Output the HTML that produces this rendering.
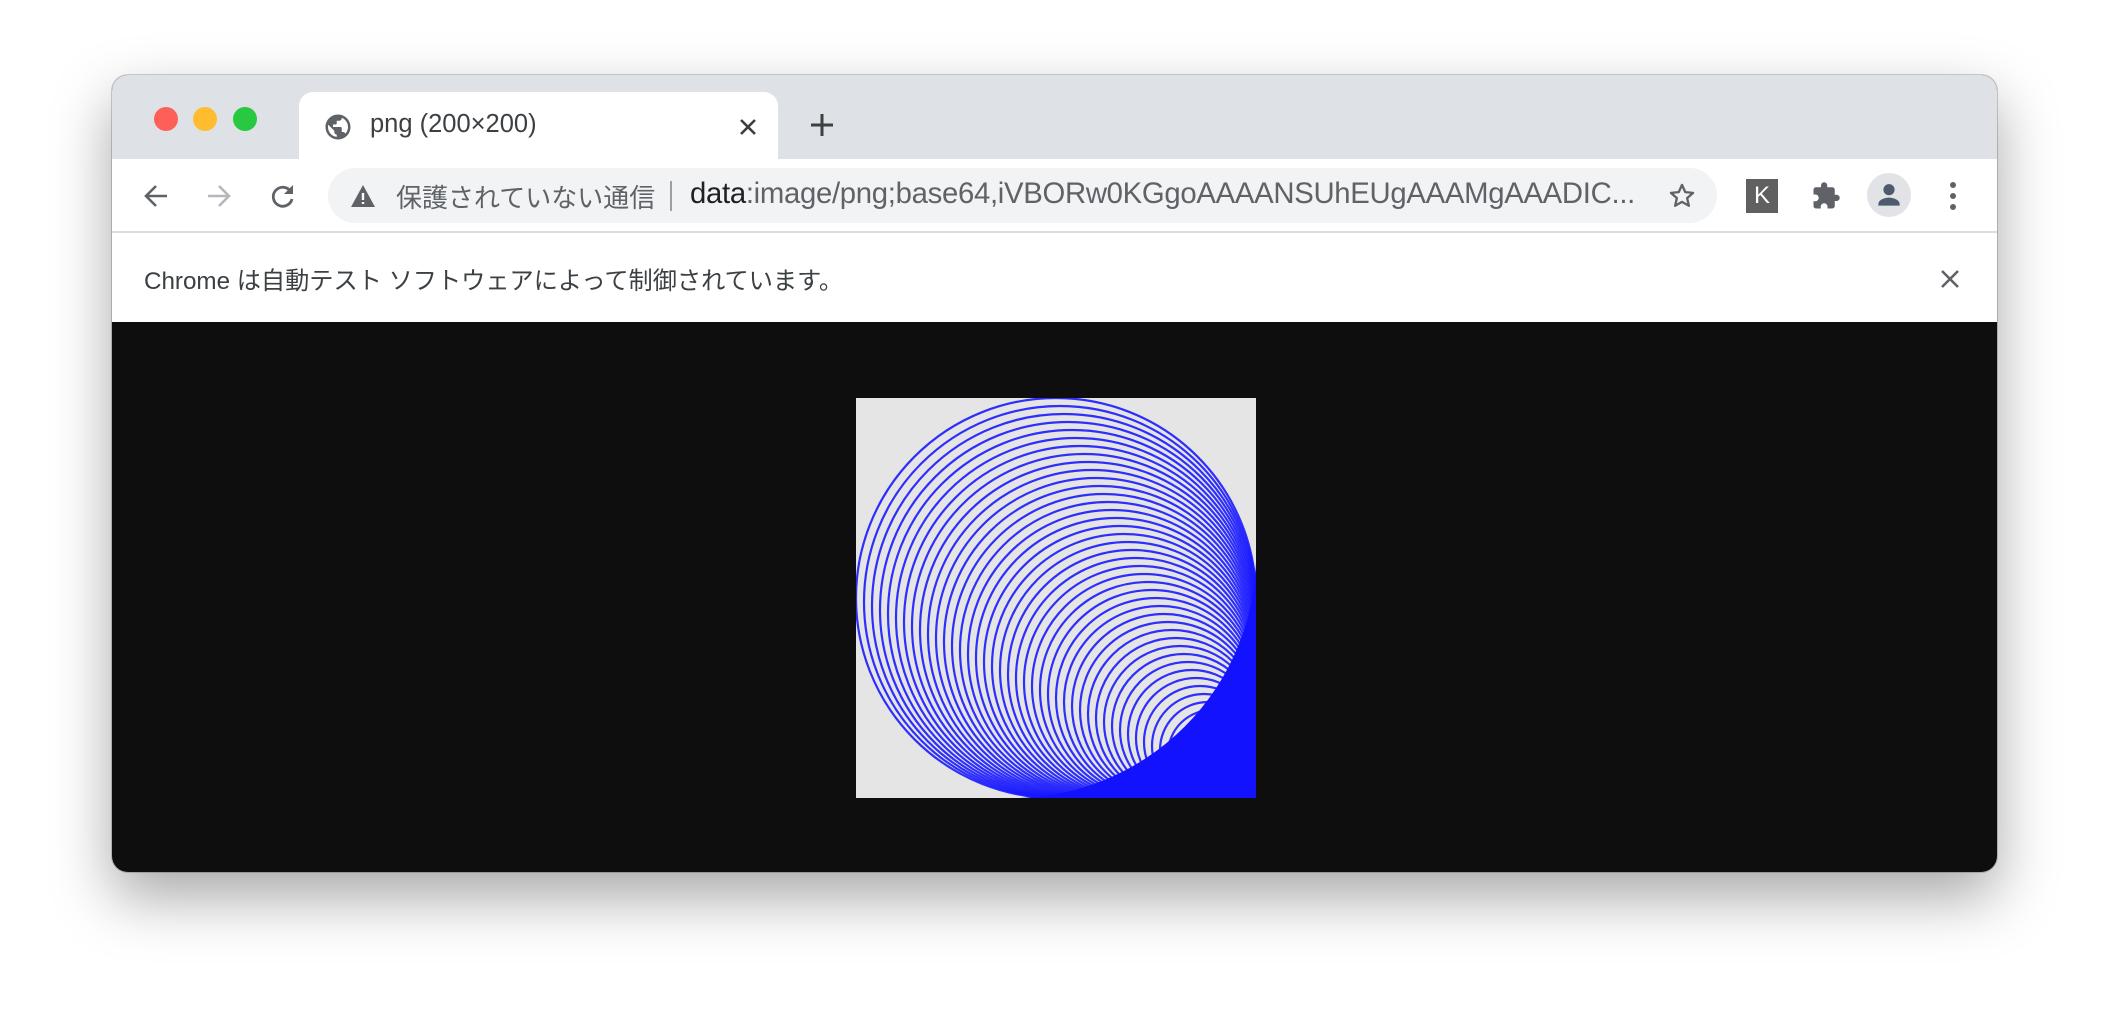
<!DOCTYPE html>
<html><head><meta charset="utf-8"><style>
*{margin:0;padding:0;box-sizing:border-box}
body{width:2110px;height:1022px;background:#fff;position:relative;overflow:hidden;font-family:"Liberation Sans","Noto Sans CJK JP",sans-serif}
.win{position:absolute;left:112px;top:75px;width:1885px;height:797px;border-radius:16px;overflow:hidden;background:#0e0e0e;box-shadow:0 25px 60px rgba(0,0,0,.35),0 0 0 1px rgba(0,0,0,.18)}
.strip{position:absolute;left:0;top:0;width:100%;height:84px;background:#dee1e6}
.dot{position:absolute;top:32px;width:24px;height:24px;border-radius:50%}
.tab{position:absolute;left:187px;top:17px;width:479px;height:70px;background:#fff;border-radius:14px 14px 0 0}
.tab .t{position:absolute;left:71px;top:18px;font-size:25.5px;color:#3c4043}
.tool{position:absolute;left:0;top:84px;width:100%;height:74px;background:#fff;border-bottom:2px solid #dadce0}
.omni{position:absolute;left:216px;top:9px;width:1389px;height:55px;border-radius:28px;background:#f1f3f4}
.omni .sec{position:absolute;left:68px;top:10px;font-size:26px;color:#5f6368}
.omni .div{position:absolute;left:342px;top:13px;width:2px;height:30px;background:#9aa0a6}
.omni .url{position:absolute;left:362px;top:9px;font-size:29.3px;color:#5f6368;letter-spacing:-0.3px}
.info{position:absolute;left:0;top:158px;width:100%;height:89px;background:#fff}
.info .t{position:absolute;left:32px;top:28px;font-size:24.2px;color:#3c4043}
.img{position:absolute;left:744px;top:323px;width:400px;height:400px;background:#e5e5e5;overflow:hidden}
</style></head><body>
<div class="win">
<div class="strip"></div>
<div class="dot" style="left:42px;background:#fe5f57"></div>
<div class="dot" style="left:81px;background:#febc2e"></div>
<div class="dot" style="left:121px;background:#28c840"></div>
<div class="tab">
<svg style="position:absolute;left:24px;top:20px" width="30" height="30" viewBox="0 0 24 24"><path fill="#5f6368" d="M12 2C6.48 2 2 6.48 2 12s4.48 10 10 10 10-4.48 10-10S17.52 2 12 2zm-1 17.93c-3.95-.49-7-3.85-7-7.93 0-.62.08-1.21.21-1.79L9 15v1c0 1.1.9 2 2 2v1.93zm6.9-2.54c-.26-.81-1-1.39-1.9-1.39h-1v-3c0-.55-.45-1-1-1H8v-2h2c.55 0 1-.45 1-1V7h2c1.1 0 2-.9 2-2v-.41c2.93 1.19 5 4.06 5 7.41 0 2.08-.8 3.97-2.1 5.39z"/></svg>
<div class="t">png (200×200)</div>
<svg style="position:absolute;left:439px;top:25px" width="20" height="20" viewBox="0 0 20 20"><path d="M3 3L17 17M17 3L3 17" stroke="#3c4043" stroke-width="2.6"/></svg>
</div>
<svg style="position:absolute;left:697px;top:37px" width="26" height="26" viewBox="0 0 26 26"><path d="M13 2V24M2 13H24" stroke="#3c4043" stroke-width="3"/></svg>
<div class="tool">
<svg style="position:absolute;left:31px;top:24px" width="26" height="26" viewBox="0 0 26 26"><path d="M24 13H4M13 3L3 13L13 23" stroke="#5f6368" stroke-width="2.6" fill="none"/></svg>
<svg style="position:absolute;left:94px;top:24px" width="26" height="26" viewBox="0 0 26 26"><path d="M2 13H22M13 3L23 13L13 23" stroke="#b4b7bb" stroke-width="2.6" fill="none"/></svg>
<svg style="position:absolute;left:158px;top:24px" width="26" height="26" viewBox="0 0 26 26"><path d="M21 9A9.5 9.5 0 1 0 22 16" stroke="#5f6368" stroke-width="2.8" fill="none"/><path d="M23 2V11H14Z" fill="#5f6368"/></svg>
<div class="omni">
<svg style="position:absolute;left:22px;top:16px" width="26" height="24" viewBox="0 0 26 24"><path d="M13 1L25 23H1Z" fill="#5f6368"/><path d="M13 9V16M13 18V20" stroke="#fff" stroke-width="2.4"/></svg>
<div class="sec">保護されていない通信</div>
<div class="div"></div>
<div class="url"><span style="color:#202124">data</span>:image/png;base64,iVBORw0KGgoAAAANSUhEUgAAAMgAAADIC...</div>
<svg style="position:absolute;left:1340px;top:14px" width="28" height="28" viewBox="0 0 24 24"><path d="M12 2.5l2.8 6.2 6.7.6-5.1 4.5 1.5 6.6L12 17l-5.9 3.4 1.5-6.6-5.1-4.5 6.7-.6z" stroke="#5f6368" stroke-width="2" fill="none" stroke-linejoin="round"/></svg>
</div>
<div style="position:absolute;left:1634px;top:20px;width:32px;height:34px;background:#606060;color:#fff;font-size:24px;text-align:center;line-height:34px">K</div>
<svg style="position:absolute;left:1699px;top:21px" width="30" height="32" viewBox="0 0 24 24"><path d="M20.5 11H19V7a2 2 0 0 0-2-2h-4V3.5a2.5 2.5 0 0 0-5 0V5H4a2 2 0 0 0-2 2v3.8h1.5a2.7 2.7 0 0 1 0 5.4H2V20a2 2 0 0 0 2 2h3.8v-1.5a2.7 2.7 0 0 1 5.4 0V22H17a2 2 0 0 0 2-2v-4h1.5a2.5 2.5 0 0 0 0-5z" fill="#5f6368"/></svg>
<div style="position:absolute;left:1755px;top:14px;width:44px;height:44px;border-radius:50%;background:#e1e3e6"></div>
<svg style="position:absolute;left:1761px;top:20px" width="32" height="32" viewBox="0 0 24 24"><circle cx="12" cy="8" r="4.2" fill="#4e5a6e"/><path d="M4 19c0-3.5 5-5 8-5s8 1.5 8 5v1H4z" fill="#4e5a6e"/></svg>
<svg style="position:absolute;left:1835px;top:20px" width="12" height="34" viewBox="0 0 12 34"><circle cx="6" cy="6" r="3" fill="#5f6368"/><circle cx="6" cy="17" r="3" fill="#5f6368"/><circle cx="6" cy="28" r="3" fill="#5f6368"/></svg>
</div>
<div class="info">
<div class="t">Chrome は自動テスト ソフトウェアによって制御されています。</div>
<svg style="position:absolute;left:1828px;top:36px" width="20" height="20" viewBox="0 0 20 20"><path d="M2 2L18 18M18 2L2 18" stroke="#5f6368" stroke-width="2.6"/></svg>
</div>
<div class="img">
<svg width="400" height="400" viewBox="0 0 200 200" fill="none" stroke="#1a1aff" stroke-width="1.1" stroke-opacity="0.9">
<circle cx="100" cy="100" r="100"/><circle cx="102" cy="102" r="98"/><circle cx="104" cy="104" r="96"/><circle cx="106" cy="106" r="94"/><circle cx="108" cy="108" r="92"/><circle cx="110" cy="110" r="90"/><circle cx="112" cy="112" r="88"/><circle cx="114" cy="114" r="86"/><circle cx="116" cy="116" r="84"/><circle cx="118" cy="118" r="82"/>
<circle cx="120" cy="120" r="80"/><circle cx="122" cy="122" r="78"/><circle cx="124" cy="124" r="76"/><circle cx="126" cy="126" r="74"/><circle cx="128" cy="128" r="72"/><circle cx="130" cy="130" r="70"/><circle cx="132" cy="132" r="68"/><circle cx="134" cy="134" r="66"/><circle cx="136" cy="136" r="64"/><circle cx="138" cy="138" r="62"/>
<circle cx="140" cy="140" r="60"/><circle cx="142" cy="142" r="58"/><circle cx="144" cy="144" r="56"/><circle cx="146" cy="146" r="54"/><circle cx="148" cy="148" r="52"/><circle cx="150" cy="150" r="50"/><circle cx="152" cy="152" r="48"/><circle cx="154" cy="154" r="46"/><circle cx="156" cy="156" r="44"/><circle cx="158" cy="158" r="42"/>
<circle cx="160" cy="160" r="40"/><circle cx="162" cy="162" r="38"/><circle cx="164" cy="164" r="36"/><circle cx="166" cy="166" r="34"/><circle cx="168" cy="168" r="32"/><circle cx="170" cy="170" r="30"/><circle cx="172" cy="172" r="28"/><circle cx="174" cy="174" r="26"/><circle cx="176" cy="176" r="24"/><circle cx="178" cy="178" r="22"/>
<path d="M200,74 A122,122 0 0 1 74,200 L200,200 Z" fill="#1212ff" stroke="none"/>
</svg>
</div>
</div>
</body></html>
